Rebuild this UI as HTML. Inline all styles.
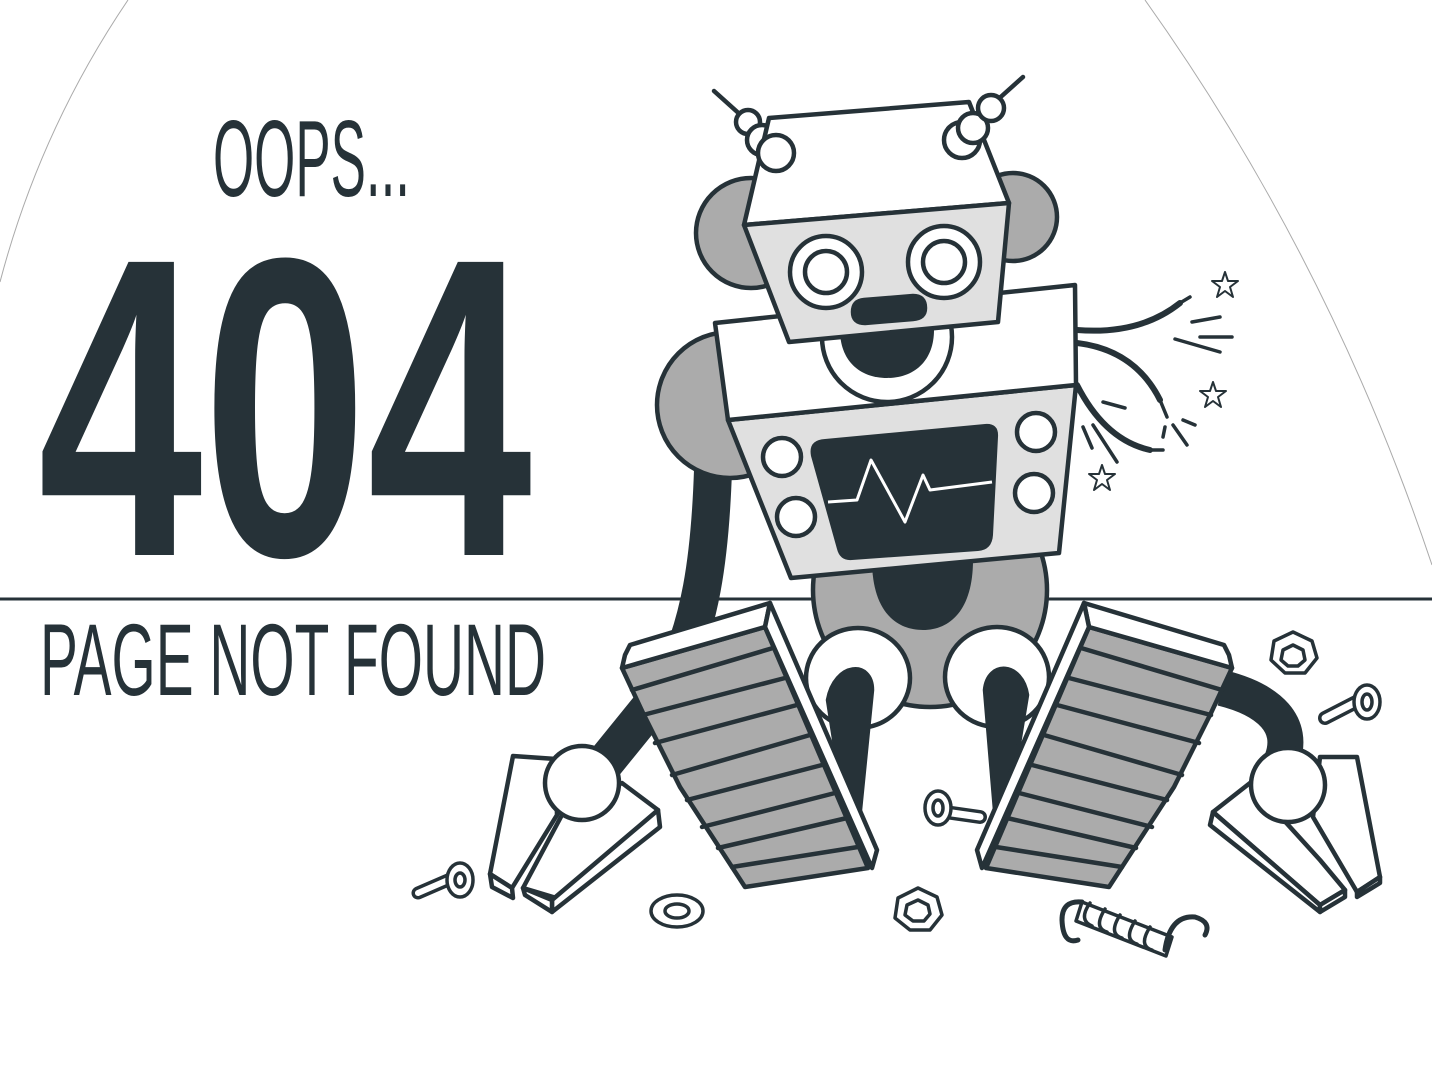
<!DOCTYPE html>
<html><head><meta charset="utf-8"><style>
html,body{margin:0;padding:0;background:#fff;width:1432px;height:1070px;overflow:hidden}
svg{display:block}
</style></head><body>
<svg width="1432" height="1070" viewBox="0 0 1432 1070" xmlns="http://www.w3.org/2000/svg">
<rect width="1432" height="1070" fill="#fff"/>
<path d="M128,0 Q40,130 0,282" fill="none" stroke="#aaa" stroke-width="1"/>
<path d="M1145,0 Q1330,260 1432,565" fill="none" stroke="#aaa" stroke-width="1"/>
<line x1="0" y1="599" x2="1432" y2="599" stroke="#263238" stroke-width="3"/>

<g font-family="'Liberation Sans Narrow','Liberation Sans',sans-serif" fill="#263238">
<text x="213" y="196" font-size="109" textLength="197" lengthAdjust="spacingAndGlyphs">OOPS...</text>
<text x="38" y="555" font-size="426" font-weight="bold" textLength="494" lengthAdjust="spacingAndGlyphs">404</text>
<text x="40" y="695" font-size="102" textLength="506" lengthAdjust="spacingAndGlyphs">PAGE NOT FOUND</text>
</g>

<g stroke="#263238" stroke-width="4.5" stroke-linejoin="round" stroke-linecap="round">
<path d="M713,470 C710,560 700,625 672,680 L595,775" fill="none" stroke-width="38" stroke-linecap="butt"/>
<path d="M1222,688 C1270,700 1295,725 1282,760" fill="none" stroke-width="36" stroke-linecap="butt"/>
<circle cx="730" cy="405" r="73" fill="#ababab"/>
<circle cx="930" cy="590" r="117" fill="#ababab"/>
<path d="M872,560 L973,560 C973,610 950,630 923,630 C895,630 872,610 872,560Z" fill="#263238" stroke="none"/>
<ellipse cx="858" cy="678" rx="52" ry="50" fill="#fff"/>
<ellipse cx="997" cy="677" rx="52" ry="50" fill="#fff"/>
<path d="M828,700 C835,662 872,660 872,690 L860,810 L845,810Z" fill="#263238"/>
<path d="M985,690 C988,660 1022,662 1027,695 L1008,810 L995,810Z" fill="#263238"/>

<polygon points="513,756 556,759 557,815 512,888 490,874" fill="#fff"/>
<polygon points="490,874 512,888 513,898 492,887" fill="#fff"/>
<polygon points="622,783 658,810 563,900 523,888 563,813" fill="#fff"/>
<polygon points="658,810 660,827 552,912 552,900" fill="#fff"/>
<polygon points="523,888 552,900 552,912 525,895" fill="#fff"/>
<circle cx="582" cy="783" r="37" fill="#fff"/>

<polygon points="1320,757 1357,757 1380,877 1357,892 1313,817" fill="#fff"/>
<polygon points="1357,892 1380,877 1380,883 1357,897" fill="#fff"/>
<polygon points="1213,812 1250,783 1320,860 1345,890 1320,905" fill="#fff"/>
<polygon points="1210,825 1213,812 1320,905 1320,912" fill="#fff"/>
<polygon points="1320,905 1345,890 1345,897 1320,912" fill="#fff"/>
<circle cx="1288" cy="785" r="37" fill="#fff"/>

<g id="trk">
<polygon points="622,668 765,627 868,868 745,887 680,787 643,713" fill="#ababab"/>
<polygon points="625,655 630,645 770,603 765,627 622,668" fill="#fff"/>
<polygon points="770,603 877,850 872,868 765,627" fill="#fff"/>
<g fill="none">
<line x1="632" y1="690" x2="773" y2="648"/>
<line x1="643" y1="715" x2="785" y2="678"/>
<line x1="655" y1="743" x2="797" y2="705"/>
<line x1="672" y1="775" x2="810" y2="735"/>
<line x1="687" y1="800" x2="822" y2="765"/>
<line x1="702" y1="827" x2="835" y2="793"/>
<line x1="718" y1="848" x2="847" y2="818"/>
<line x1="732" y1="867" x2="858" y2="847"/>
</g>
</g>
<use href="#trk" transform="translate(1854,0) scale(-1,1)"/>

<polygon points="728,420 1076,385 1059,553 791,578" fill="#e0e0e0"/>
<path d="M825,439 L985,424 Q999,423 998,437 L993,535 Q992,550 978,551 L852,560 Q840,561 837,549 L811,456 Q808,440 825,439Z" fill="#263238" stroke="none"/>
<polyline points="828,502 857,500 871,460 905,522 923,475 930,490 992,482" fill="none" stroke="#fff" stroke-width="3" stroke-linecap="butt"/>
<circle cx="782" cy="457" r="19" fill="#fff"/>
<circle cx="796" cy="517" r="19" fill="#fff"/>
<circle cx="1036" cy="432" r="19" fill="#fff"/>
<circle cx="1034" cy="493" r="19" fill="#fff"/>
<polygon points="715,323 1075,285 1076,385 728,420" fill="#fff"/>
<circle cx="887" cy="337" r="65" fill="#fff"/>
<path d="M840,330 L934,330 C934,360 915,378 887,378 C859,378 840,360 840,330Z" fill="#263238" stroke="none"/>
<g fill="none" stroke-width="6">
<path d="M1077,330 Q1140,335 1180,303"/>
<path d="M1077,343 Q1135,350 1160,400"/>
<path d="M1077,385 Q1105,440 1150,450"/>
</g>
<g fill="none" stroke-width="3.5">
<path d="M1180,303 L1190,297"/><path d="M1160,400 L1167,417"/><path d="M1150,450 L1163,450"/>
<line x1="1192" y1="322" x2="1220" y2="317"/><line x1="1200" y1="337" x2="1232" y2="337"/>
<line x1="1175" y1="339" x2="1220" y2="352"/><line x1="1103" y1="402" x2="1125" y2="408"/>
<line x1="1083" y1="427" x2="1092" y2="448"/><line x1="1093" y1="425" x2="1117" y2="462"/>
<line x1="1165" y1="427" x2="1163" y2="437"/><line x1="1173" y1="425" x2="1187" y2="445"/>
<line x1="1183" y1="420" x2="1195" y2="425"/>
</g>
<g fill="#fff" stroke-width="2">
<polygon points="1225,272 1228,281 1238,281 1230,287 1233,297 1225,291 1217,297 1220,287 1212,281 1222,281"/>
<polygon points="1213,382 1216,391 1226,391 1218,397 1221,407 1213,401 1205,407 1208,397 1200,391 1210,391"/>
<polygon points="1102,465 1105,474 1115,474 1107,480 1110,490 1102,484 1094,490 1097,480 1089,474 1099,474"/>
</g>

<circle cx="751" cy="233" r="55" fill="#ababab"/>
<circle cx="1013" cy="217" r="44" fill="#ababab"/>
<line x1="714" y1="91" x2="744" y2="118"/>
<line x1="1023" y1="77" x2="994" y2="103"/>
<circle cx="748" cy="122" r="12" fill="#fff"/>
<circle cx="762" cy="140" r="15" fill="#fff"/>
<polygon points="769,118 969,102 1009,203 744,225" fill="#fff"/>
<circle cx="776" cy="153" r="18" fill="#fff"/>
<circle cx="962" cy="140" r="18" fill="#fff"/>
<circle cx="973" cy="128" r="15" fill="#fff"/>
<circle cx="991" cy="108" r="13" fill="#fff"/>
<polygon points="744,225 1009,203 998,322 789,342" fill="#e0e0e0"/>
<circle cx="826" cy="272" r="36" fill="#fff"/>
<circle cx="826" cy="272" r="21" fill="#fff"/>
<circle cx="944" cy="262" r="36" fill="#fff"/>
<circle cx="944" cy="262" r="21" fill="#fff"/>
<path d="M864,300 L913,296 Q925,296 925,308 Q925,318 913,319 L865,323 Q853,323 853,312 Q853,301 864,300Z" fill="#263238"/>

<g fill="#fff" stroke-width="3.5">
<path d="M418,893 L455,877" stroke-width="13" stroke="#263238"/>
<path d="M418,893 L455,877" stroke-width="6" stroke="#fff"/>
<ellipse cx="460" cy="880" rx="13" ry="17"/>
<ellipse cx="460" cy="880" rx="5" ry="7"/>
<ellipse cx="677" cy="911" rx="26" ry="16"/>
<ellipse cx="677" cy="911" rx="12" ry="7"/>
<path d="M945,812 L980,817" stroke-width="14" stroke="#263238"/>
<path d="M945,812 L980,817" stroke-width="7" stroke="#fff"/>
<ellipse cx="938" cy="808" rx="13" ry="17"/>
<ellipse cx="938" cy="808" rx="5" ry="8"/>
<path d="M1325,718 L1360,700" stroke-width="14" stroke="#263238"/>
<path d="M1325,718 L1360,700" stroke-width="7" stroke="#fff"/>
<ellipse cx="1367" cy="702" rx="13" ry="17"/>
<ellipse cx="1367" cy="702" rx="5" ry="8"/>
<polygon points="918,888 937,897 942,915 930,930 910,930 895,918 898,898"/>
<polygon points="918,900 928,905 930,914 924,921 913,921 905,915 907,905"/>
<polygon points="1293,632 1312,641 1317,658 1305,673 1285,673 1271,660 1274,641"/>
<polygon points="1293,645 1303,650 1305,660 1298,666 1288,666 1281,660 1283,650"/>
<path d="M1082,902 L1172,937 L1166,956 L1076,921Z"/>
<g fill="none">
<path d="M1090,903 Q1078,920 1092,926"/><path d="M1105,909 Q1093,928 1107,932"/>
<path d="M1120,915 Q1108,934 1122,938"/><path d="M1135,921 Q1123,940 1137,944"/>
<path d="M1150,927 Q1138,946 1152,950"/>
<path d="M1082,902 Q1062,900 1062,920 Q1063,945 1078,940" stroke-width="5"/>
<path d="M1165,950 Q1170,915 1195,917 Q1212,922 1205,935" stroke-width="5"/>
</g>
</g>
</g>
</svg>
</body></html>
